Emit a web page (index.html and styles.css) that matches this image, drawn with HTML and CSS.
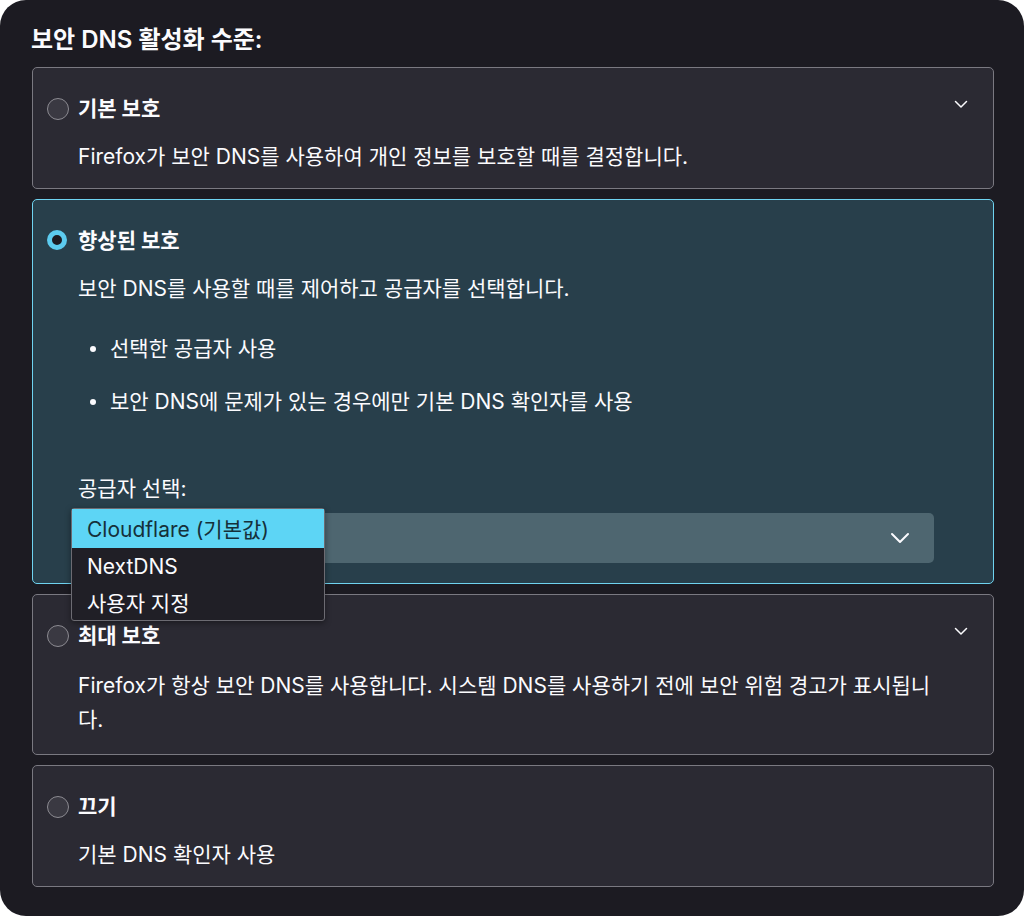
FILE: index.html
```html
<!DOCTYPE html>
<html lang="ko">
<head>
<meta charset="utf-8">
<link rel="stylesheet" href="styles.css">
</head>
<body>
<div class="panel">
  <h2 class="title">보안 DNS 활성화 수준:</h2>
  <div class="cards">
    <div class="card">
      <span class="radio"></span>
      <div class="content">
        <div class="label">기본 보호</div>
        <div class="desc">Firefox가 보안 DNS를 사용하여 개인 정보를 보호할 때를 결정합니다.</div>
      </div>
      <svg class="chev" width="14" height="9" viewBox="0 0 14 9"><path d="M1.5 1.5 L7 7 L12.5 1.5" fill="none" stroke="#fbfbfe" stroke-width="1.5" stroke-linecap="round" stroke-linejoin="round"/></svg>
    </div>

    <div class="card selected">
      <span class="radio checked"></span>
      <div class="content">
        <div class="label">향상된 보호</div>
        <div class="desc">보안 DNS를 사용할 때를 제어하고 공급자를 선택합니다.</div>
        <ul class="bullets">
          <li>선택한 공급자 사용</li>
          <li>보안 DNS에 문제가 있는 경우에만 기본 DNS 확인자를 사용</li>
        </ul>
        <div class="field-label">공급자 선택:</div>
        <div class="select-wrap">
          <div class="select">
            <svg class="select-chev" width="20" height="12" viewBox="0 0 20 12"><path d="M2 2 L10 10 L18 2" fill="none" stroke="#fbfbfe" stroke-width="2" stroke-linecap="round" stroke-linejoin="round"/></svg>
          </div>
          <div class="popup">
            <div class="opt active">Cloudflare (기본값)</div>
            <div class="opt">NextDNS</div>
            <div class="opt">사용자 지정</div>
          </div>
        </div>
      </div>
      <span class="chev-space"></span>
    </div>

    <div class="card tall">
      <span class="radio"></span>
      <div class="content">
        <div class="label">최대 보호</div>
        <div class="desc">Firefox가 항상 보안 DNS를 사용합니다. 시스템 DNS를 사용하기 전에 보안 위험 경고가 표시됩니다.</div>
      </div>
      <svg class="chev" width="14" height="9" viewBox="0 0 14 9"><path d="M1.5 1.5 L7 7 L12.5 1.5" fill="none" stroke="#fbfbfe" stroke-width="1.5" stroke-linecap="round" stroke-linejoin="round"/></svg>
    </div>

    <div class="card">
      <span class="radio"></span>
      <div class="content">
        <div class="label">끄기</div>
        <div class="desc">기본 DNS 확인자 사용</div>
      </div>
      <span class="chev-space"></span>
    </div>
  </div>
</div>
</body>
</html>
```

FILE: styles.css
```css
html, body {
  margin: 0;
  padding: 0;
  background: #ffffff;
}

body {
  font-family: Inter, "Noto Sans CJK KR", sans-serif;
  color: #fbfbfe;
  font-size: 21px;
}

.panel {
  width: 1024px;
  height: 916px;
  box-sizing: border-box;
  background: #1c1b22;
  border-radius: 26px;
  padding: 23px 30px 0 32px;
}

.title {
  margin: 0 0 10px -1px;
  font-size: 24px;
  font-weight: 600;
  line-height: 34px;
}

.cards {
  display: flex;
  flex-direction: column;
  gap: 10px;
}

.card {
  display: grid;
  grid-template-columns: 22px 1fr 50px;
  column-gap: 9px;
  background: #2b2a33;
  border: 1px solid #7a7981;
  border-radius: 5px;
  padding: 24px 0 14px 14px;
}

.card.selected {
  background: #283f4b;
  border-color: #6fd3f0;
  padding-bottom: 20px;
}

.card.tall {
  padding-bottom: 17px;
}

.card.tall .desc {
  margin-top: 16px;
}

.radio {
  width: 20px;
  height: 20px;
  margin-top: 6px;
  border-radius: 50%;
  border: 1.5px solid #8c8b92;
  background: #3a3942;
  box-sizing: content-box;
}

.radio.checked {
  width: 10px;
  height: 10px;
  border: 5.5px solid #5ccbef;
  background: #1c1b22;
}

.content {
  min-width: 0;
}

.label {
  font-weight: 700;
  line-height: 34px;
}

.desc {
  margin-top: 14px;
  line-height: 34px;
}

.chev {
  justify-self: center;
  margin-top: 8px;
  margin-right: 14px;
}

.bullets {
  list-style: none;
  margin: 26px 0 0;
  padding: 0;
  display: flex;
  flex-direction: column;
  gap: 19px;
}

.bullets li {
  position: relative;
  padding-left: 32px;
  line-height: 34px;
}

.bullets li::before {
  content: "";
  position: absolute;
  left: 12px;
  top: 14px;
  width: 6px;
  height: 6px;
  border-radius: 50%;
  background: #fbfbfe;
}

.field-label {
  margin-top: 53px;
  line-height: 34px;
}

.select-wrap {
  position: relative;
  margin-top: 7px;
}

.select {
  height: 50px;
  background: #4e6670;
  border-radius: 5px;
  display: flex;
  align-items: center;
  justify-content: flex-end;
  padding-right: 24px;
}

.popup {
  position: absolute;
  left: -7px;
  top: -5px;
  width: 252px;
  background: #201f26;
  border: 1px solid #6c6b72;
  border-radius: 3px;
  box-shadow: 0 2px 6px rgba(0, 0, 0, 0.4);
  z-index: 2;
}

.opt {
  height: 37px;
  line-height: 37px;
  padding-top: 2px;
  margin-bottom: -2px;
  padding-left: 15px;
  font-size: 21px;
  color: #fbfbfe;
}

.opt.active {
  background: #5dd5f5;
  color: #15303a;
}
```
